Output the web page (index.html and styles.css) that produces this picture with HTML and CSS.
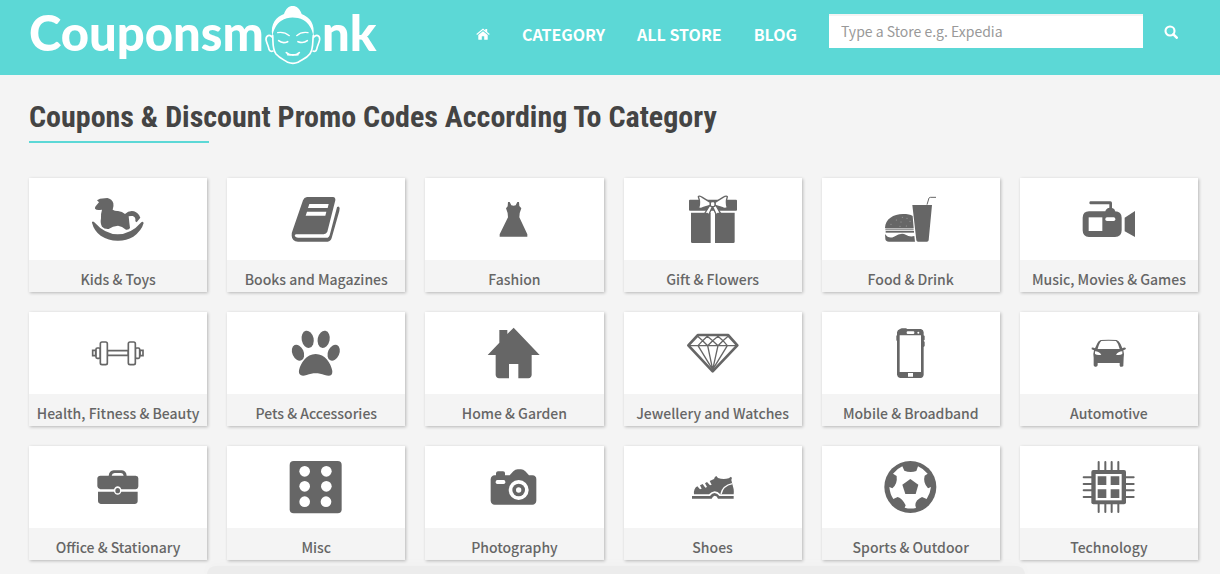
FILE: index.html
```html
<!DOCTYPE html>
<html lang="en">
<head>
    <meta charset="UTF-8">
    <meta name="viewport" content="width=device-width, initial-scale=1.0">
    <title>Couponsmonk - Coupons &amp; Discount Promo Codes</title>
    <link rel="stylesheet" href="styles.css">
</head>
<body>
    <header class="header">
        <a class="logo" href="#" aria-label="Couponsmonk">
            <span>Couponsm</span>
            <svg class="logo-face" viewBox="800 15 174 180">
                <path fill="#fff" d="M825 108C818 70 838 50 860 42C866 26 874 18 886 18C898 18 907 26 913 42C938 52 954 72 948 108C944 86 934 70 918 60C896 50 872 50 852 62C837 72 829 88 825 108Z"/>
                <g fill="none" stroke="#fff" stroke-width="5" stroke-linecap="round" stroke-linejoin="round">
                    <path d="M826 106C828 126 824 146 836 162C848 176 862 180 871 187C881 191 893 191 902 187C913 179 928 175 938 161C949 145 945 126 948 106"/>
                    <path d="M825 112C817 102 806 106 806 119C808 130 813 136 815 148C818 155 823 155 827 153"/>
                    <path d="M949 112C957 102 968 106 967 119C965 130 960 136 958 148C956 155 951 155 947 153"/>
                    <path stroke-width="4" d="M841 98C853 96 866 99 876 107M932 98C920 96 907 99 898 107"/>
                    <path d="M844 122C851 128 862 129 871 125M930 122C922 128 912 129 902 125"/>
                    <path d="M867 158C878 168 896 168 906 158M871 164C881 165 892 165 902 164"/>
                </g>
            </svg>
            <span>nk</span>
        </a>
        <nav class="nav">
            <a href="#" aria-label="Home">
                <svg class="nav-icon" viewBox="0 0 14 12">
                    <path fill="#fff" d="M7 3.2L2.3 7V11.2Q2.3 11.7 2.8 11.7H5.8V8.3H8.2V11.7H11.2Q11.7 11.7 11.7 11.2V7ZM.3 6.1L7 .5L9.3 2.4V1H11.2V4L13.7 6.1L13 6.9L7 2L1 6.9Z"/>
                </svg>
            </a>
            <a href="#">CATEGORY</a>
            <a href="#">ALL STORE</a>
            <a href="#">BLOG</a>
        </nav>
        <form class="search">
            <input type="text" class="search-input" aria-label="Store" placeholder="Type a Store e.g. Expedia">
            <button type="submit" class="search-btn" aria-label="Search">
                <svg class="search-icon" viewBox="0 0 14 14">
                    <circle cx="6" cy="6" r="4.5" fill="none" stroke="#fff" stroke-width="2.1"/>
                    <path d="M9.4 9.4L12.7 12.7" stroke="#fff" stroke-width="2.6" stroke-linecap="round"/>
                </svg>
            </button>
        </form>
    </header>

    <main class="container">
        <h1 class="title">Coupons &amp; Discount Promo Codes According To Category</h1>

        <div class="grid">
            <a class="card" href="#">
                <span class="card-icon"><svg viewBox="204 57 180 180">
                    <path d="M231 91L240 86L262 84Q276 87 280 100Q282 110 278 119Q286 124 294 123Q307 124 315 132Q326 121 342 124Q355 128 361 143L350 157L346 154Q348 141 338 138Q330 137 326 139Q328 160 330 174Q327 180 318 179Q306 168 294 167Q278 168 266 177Q253 178 246 170Q240 160 243 145Q242 131 246 119L239 120Q229 121 225 116Q223 112 230 105L237 97Z"/>
                    <path d="M216 156Q219 152 223 157Q255 193 293 193Q333 193 364 157Q368 152 371 159Q365 182 340 200Q317 213 292 212Q266 212 242 197Q222 182 216 158Z"/>
                </svg></span>
                <span class="card-label">Kids &amp; Toys</span>
            </a>
            <a class="card" href="#">
                <span class="card-icon"><svg viewBox="799 57 180 180">
                    <path d="M862 81H940Q948 82 947 91L923 185Q920 192 912 193H829Q823 194 826 199Q828 203 835 203H924Q928 202 930 196L952 112Q957 106 960 114L959 123L936 204Q933 214 924 215H835Q817 214 816 197Q815 190 820 178L850 91Q853 82 862 81Z"/>
                    <path fill="#fff" d="M869 102H927L924 114H865ZM862 125H920L917 137H858Z"/>
                </svg></span>
                <span class="card-label">Books and Magazines</span>
            </a>
            <a class="card" href="#">
                <span class="card-icon"><svg viewBox="209 57 180 180">
                    <path d="M281 96H286L291 106Q298 108 304 106L309 96H314L315 108L321 115Q315 128 315 142L339 193V200H256V193L281 142Q281 128 275 115L280 109Z"/>
                </svg></span>
                <span class="card-label">Fashion</span>
            </a>
            <a class="card" href="#">
                <span class="card-icon"><svg viewBox="804 57 180 180">
                    <rect x="822" y="89" width="144" height="33" rx="3"/>
                    <path d="M828 128H887V219H832Q828 219 828 215ZM900 128H959V215Q959 219 955 219H900Z"/>
                    <g fill="#fff" stroke="#666" stroke-width="4" stroke-linejoin="round">
                        <path d="M885 105L868 132L876 130L881 135L892 110ZM902 105L917 131L909 130L904 135L893 110Z"/>
                        <path d="M886 97L862 82Q852 76 850 80Q857 98 851 113Q856 118 866 112L886 106ZM900 97L924 82Q934 76 937 80Q931 98 937 113Q930 118 920 112L900 106Z"/>
                        <rect x="886" y="95" width="14" height="15" rx="5"/>
                    </g>
                    <path fill="none" stroke="#fff" stroke-width="2" d="M822 125H867M920 125H966"/>
                </svg></span>
                <span class="card-label">Gift &amp; Flowers</span>
            </a>
            <a class="card" href="#">
                <span class="card-icon"><svg viewBox="200 57 180 180">
                    <path d="M212 174C213 147 237 132 266 132C279 132 289 134 295 138L298 174ZM212 192Q223 208 239 200Q261 186 274 194Q286 202 300 198L302 215H224Q213 214 213 206ZM294 105H353L343 211Q342 215 338 215H311Q307 215 306 211Z"/>
                    <path fill="#999" d="M213 175H298V181H213Z"/>
                    <path d="M214 183H299V188H214Z"/>
                    <path d="M338 104L344 84Q345 82 348 82H365" fill="none" stroke="#666" stroke-width="3"/>
                    <g fill="#aaa"><circle cx="264" cy="142" r="1.5"/><circle cx="278" cy="145" r="1.5"/><circle cx="246" cy="150" r="1.5"/><circle cx="260" cy="156" r="1.5"/><circle cx="287" cy="154" r="1.5"/><circle cx="230" cy="163" r="1.5"/><circle cx="257" cy="169" r="1.5"/><circle cx="276" cy="168" r="1.5"/></g>
                </svg></span>
                <span class="card-label">Food &amp; Drink</span>
            </a>
            <a class="card" href="#">
                <span class="card-icon"><svg viewBox="794 57 180 180">
                    <path d="M828 94H888Q893 94 893 99V114Q902 116 902 124Q922 125 922 143V181Q922 201 902 201H824Q805 200 805 181V143Q806 124 824 124H873Q874 116 885 113V103H828Q825 102 825 99Q825 95 828 94ZM931 143L962 123V201L931 184Z"/>
                    <rect fill="#fff" x="823" y="142" width="41" height="41"/>
                    <rect fill="#fff" x="873" y="142" width="30" height="11" rx="5"/>
                </svg></span>
                <span class="card-label">Music, Movies &amp; Games</span>
            </a>

            <a class="card" href="#">
                <span class="card-icon"><svg viewBox="204 54 180 180">
                    <g fill="#fff" stroke="#666" stroke-width="5">
                        <path d="M262 137H325V151H262Z"/>
                        <path d="M227 136H218V152H227ZM360 136H369V152H360Z"/>
                        <rect x="228" y="129" width="13" height="31" rx="4"/>
                        <rect x="346" y="129" width="13" height="31" rx="4"/>
                        <rect x="241" y="111" width="21" height="68" rx="5"/>
                        <rect x="325" y="111" width="21" height="68" rx="5"/>
                    </g>
                </svg></span>
                <span class="card-label">Health, Fitness &amp; Beauty</span>
            </a>
            <a class="card" href="#">
                <span class="card-icon"><svg viewBox="799 54 180 180">
                    <ellipse cx="864" cy="103" rx="18" ry="26" transform="rotate(-12 864 103)"/>
                    <ellipse cx="912" cy="103" rx="18" ry="26" transform="rotate(12 912 103)"/>
                    <ellipse cx="835" cy="143" rx="17" ry="25" transform="rotate(-24 835 143)"/>
                    <ellipse cx="942" cy="143" rx="17" ry="25" transform="rotate(24 942 143)"/>
                    <path d="M888 147C916 147 934 175 938 198C939 213 929 215 915 210C896 203 880 203 861 210C846 215 836 211 838 196C843 175 860 147 888 147Z"/>
                </svg></span>
                <span class="card-label">Pets &amp; Accessories</span>
            </a>
            <a class="card" href="#">
                <span class="card-icon"><svg viewBox="209 54 180 180">
                    <path d="M255 75H279V87L298 68L376 150H352V210Q351 219 342 220H312V177H284V220H254Q245 219 244 210V150H220L255 113Z"/>
                </svg></span>
                <span class="card-label">Home &amp; Garden</span>
            </a>
            <a class="card" href="#">
                <span class="card-icon"><svg viewBox="804 54 180 180">
                    <g fill="none" stroke="#666" stroke-width="4" stroke-linejoin="round">
                        <path stroke-width="8" d="M849 90H939L967 121L893 199L820 121Z"/>
                        <path d="M823 122H965M848 94L863 107L877 94L893 107L909 94L924 107L939 94M863 107L849 122L893 194L937 122L924 107L909 122L893 107L878 122L863 107M878 122L893 194L909 122"/>
                    </g>
                </svg></span>
                <span class="card-label">Jewellery and Watches</span>
            </a>
            <a class="card" href="#">
                <span class="card-icon"><svg viewBox="200 54 180 180">
                    <path d="M257 72L262 70H275L279 72H320Q328 74 328 82V91L331 93V104L328 107L331 111V123L328 126V209Q327 218 319 219H257Q249 217 248 209V108L246 106V93L248 90V82Q249 74 257 72Z"/>
                    <path fill="#fff" d="M256 91H320V201H256ZM281 204H296V215H281Z"/>
                    <rect fill="#fff" x="277" y="79" width="23" height="8" rx="3"/>
                    <circle fill="#fff" cx="312" cy="83" r="3"/>
                </svg></span>
                <span class="card-label">Mobile &amp; Broadband</span>
            </a>
            <a class="card" href="#">
                <span class="card-icon"><svg viewBox="794 54 180 180">
                    <path d="M859 105Q882 103 907 105Q914 107 919 118L924 130Q931 125 935 130Q935 135 927 136Q930 145 928 158L927 183Q926 185 922 185H918Q916 184 916 181V174H850V181Q849 185 845 185H842Q838 184 838 181V158Q836 145 839 136L832 133V128Q837 127 842 130L849 115Q852 107 859 105Z"/>
                    <path fill="#fff" d="M861 108Q883 106 905 108Q913 116 916 132H850Q854 115 861 108ZM842 139Q855 140 861 149Q849 151 842 147ZM924 139Q911 140 905 149Q917 151 924 147Z"/>
                </svg></span>
                <span class="card-label">Automotive</span>
            </a>

            <a class="card" href="#">
                <span class="card-icon"><svg viewBox="204 51 180 180">
                    <path d="M266 107Q268 92 281 91H306Q319 93 320 107H347Q355 108 355 115V139Q354 148 346 148H304Q301 139 293 139Q285 139 282 148H241Q233 147 232 139V115Q233 107 241 107ZM275 107H311Q310 99 303 99H284Q276 100 275 107ZM234 155H282Q285 164 293 164Q301 164 304 155H353V184Q352 192 344 192H242Q234 191 234 184Z"/>
                    <ellipse cx="293" cy="152" rx="7" ry="8"/>
                </svg></span>
                <span class="card-label">Office &amp; Stationary</span>
            </a>
            <a class="card" href="#">
                <span class="card-icon"><svg viewBox="799 51 180 180">
                    <rect x="810" y="63" width="156" height="157" rx="12"/>
                    <g fill="#fff"><circle cx="855" cy="94" r="16"/><circle cx="920" cy="94" r="16"/><circle cx="855" cy="139" r="16"/><circle cx="920" cy="139" r="16"/><circle cx="855" cy="185" r="16"/><circle cx="919" cy="185" r="16"/></g>
                </svg></span>
                <span class="card-label">Misc</span>
            </a>
            <a class="card" href="#">
                <span class="card-icon"><svg viewBox="209 51 180 180">
                    <path d="M245 106V99Q246 94 251 94H266Q272 94 272 99V106H286L297 94Q303 88 310 88H320Q327 88 333 94L344 106H354Q366 107 366 118V182Q365 193 354 194H241Q230 193 229 182V118Q230 107 241 106Z"/>
                    <rect fill="#fff" x="244" y="120" width="29" height="12" rx="5"/>
                    <circle fill="#fff" cx="313" cy="150" r="30"/>
                    <circle cx="313" cy="150" r="19"/>
                    <circle fill="#fff" cx="313" cy="150" r="8"/>
                </svg></span>
                <span class="card-label">Photography</span>
            </a>
            <a class="card" href="#">
                <span class="card-icon"><svg viewBox="804 51 180 180">
                    <path d="M837 163Q835 146 847 139L855 148L860 146L855 136L863 132L871 143L876 141L870 130L876 126L885 136L890 134L884 123L897 117Q899 109 904 108L909 114Q925 120 941 115L948 110Q953 113 949 120L956 148Q957 157 956 163H916Q908 154 899 154Q889 155 882 163Z"/>
                    <path fill="none" stroke="#fff" stroke-width="4" d="M918 162Q923 137 952 131"/>
                    <path d="M831 168H885Q891 159 899 159Q908 160 913 168H956V176H909Q906 167 899 167Q893 168 890 176H831Z"/>
                </svg></span>
                <span class="card-label">Shoes</span>
            </a>
            <a class="card" href="#">
                <span class="card-icon"><svg viewBox="200 51 180 180">
                    <circle cx="288" cy="141" r="78"/>
                    <path fill="#fff" d="M264 79L270 92Q288 100 306 93L311 79Q327 86 340 101L331 107Q325 127 341 145L350 141Q348 160 337 177L323 171Q303 180 303 196L305 204Q288 208 271 203L274 196Q264 175 250 171L237 177Q227 163 225 141L234 145Q250 132 247 108L236 101Q247 87 264 79Z"/>
                    <path d="M288 117L312 134L304 162H273L264 134Z"/>
                </svg></span>
                <span class="card-label">Sports &amp; Outdoor</span>
            </a>
            <a class="card" href="#">
                <span class="card-icon"><svg viewBox="794 51 180 180">
                    <path fill="none" stroke="#666" stroke-width="6" stroke-linecap="round" d="M853 66V216M873 66V216M892 66V216M912 66V216M808 112H958M808 132H958M808 151H958M808 171H958"/>
                    <rect x="831" y="90" width="104" height="103" rx="6"/>
                    <rect fill="#fff" x="844" y="102" width="78" height="79"/>
                    <path d="M850 109H876V135H850ZM889 109H915V135H889ZM850 148H876V174H850ZM889 148H915V174H889Z"/>
                </svg></span>
                <span class="card-label">Technology</span>
            </a>
        </div>
    </main>

    <div class="bottom-shade"></div>
</body>
</html>
```

FILE: styles.css
```css
* {
    box-sizing: border-box;
}
body {
    margin: 0;
    background-color: #f4f4f4;
    font-family: "Noto Sans CJK SC", "Open Sans", sans-serif;
    color: #666;
}
a {
    color: inherit;
    text-decoration: none;
}
svg {
    display: block;
}

/* header */
.header {
    display: flex;
    align-items: flex-start;
    height: 75px;
    padding: 0 21px 0 29px;
    background-color: #5cd8d6;
    color: #fff;
}
.logo {
    display: flex;
    align-items: flex-start;
    padding-top: 5px;
    font-family: Lato, sans-serif;
    font-size: 49px;
    font-weight: 900;
    line-height: 54px;
}
.logo-face {
    width: 58px;
    height: 60px;
}
.nav {
    display: flex;
    align-items: center;
    gap: 32px;
    margin-left: auto;
    padding-top: 22px;
    font-size: 16px;
    font-weight: 700;
    line-height: 24px;
}
.nav-icon {
    width: 14px;
    height: 12px;
}
.search {
    display: flex;
    margin: 14px 0 0 32px;
}
.search-input {
    width: 314px;
    height: 34px;
    padding: 0 12px 2px;
    border: none;
    border-top: 2px solid #f4f4f4;
    background: #fff;
    font-family: inherit;
    font-size: 14px;
    font-weight: 400;
}
.search-input::placeholder {
    color: #999;
}
.search-btn {
    display: flex;
    align-items: center;
    justify-content: center;
    width: 56px;
    height: 36px;
    padding: 0;
    border: none;
    background: none;
    cursor: pointer;
}
.search-icon {
    width: 14px;
    height: 14px;
}

/* categories */
.container {
    padding: 22px 22px 14px 29px;
}
.title {
    margin: 0 0 35px;
    font-family: "Roboto Condensed", Roboto, sans-serif;
    font-size: 30px;
    font-weight: 700;
    line-height: 40px;
    color: #444;
}
.title::after {
    content: "";
    display: block;
    width: 180px;
    height: 2px;
    margin-top: 4px;
    background-color: #5cd8d6;
}
.grid {
    display: grid;
    grid-template-columns: repeat(6, 1fr);
    gap: 20px;
}
.card {
    background-color: #fff;
    box-shadow: 1px 1px 3px rgba(0, 0, 0, 0.25);
}
.card-icon {
    display: flex;
    align-items: center;
    justify-content: center;
    height: 82px;
}
.card-icon svg {
    width: 60px;
    height: 60px;
    fill: #666;
}
.card-label {
    display: block;
    padding-top: 6px;
    background-color: #f4f4f4;
    font-size: 14px;
    font-weight: 500;
    line-height: 26px;
    text-align: center;
    white-space: nowrap;
}

.bottom-shade {
    position: fixed;
    right: 16%;
    bottom: 0;
    left: 17%;
    height: 8px;
    border-radius: 24px 24px 0 0;
    background-color: rgba(0, 0, 0, 0.03);
    box-shadow: 0 0 12px rgba(0, 0, 0, 0.03);
}
```
